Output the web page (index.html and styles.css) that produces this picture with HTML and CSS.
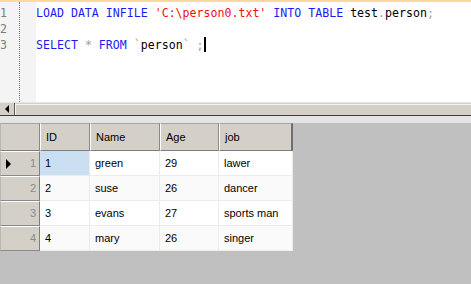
FILE: index.html
```html
<!DOCTYPE html>
<html lang="en">
<head>
    <meta charset="UTF-8">
    <title>Query</title>
    <link rel="stylesheet" href="styles.css">
</head>
<body>
    <div class="editor">
        <div class="gutter">
            <div class="line-nums">
                <div>1</div>
                <div>2</div>
                <div>3</div>
            </div>
        </div>
        <div class="code">
            <div class="line"><span class="kw">LOAD DATA INFILE</span> <span class="str">'C:\person0.txt'</span> <span class="kw">INTO TABLE</span> test<span class="op">.</span>person<span class="op">;</span></div>
            <div class="line">&nbsp;</div>
            <div class="line"><span class="kw">SELECT</span> <span class="op">*</span> <span class="kw">FROM</span> <span class="op">`</span>person<span class="op">`</span> <span class="op">;</span><span class="caret"></span></div>
        </div>
    </div>

    <div class="hscroll">
        <div class="arrow-btn"><span class="arrow-left"></span></div>
        <div class="thumb"></div>
    </div>
    <div class="splitter"></div>

    <div class="results">
        <div class="grid">
            <div class="hcell corner"></div>
            <div class="hcell">ID</div>
            <div class="hcell">Name</div>
            <div class="hcell">Age</div>
            <div class="hcell last">job</div>

            <div class="rowhead"><span class="marker"></span>1</div>
            <div class="cell selected">1</div>
            <div class="cell">green</div>
            <div class="cell">29</div>
            <div class="cell">lawer</div>

            <div class="rowhead">2</div>
            <div class="cell alt">2</div>
            <div class="cell alt">suse</div>
            <div class="cell alt">26</div>
            <div class="cell alt">dancer</div>

            <div class="rowhead">3</div>
            <div class="cell">3</div>
            <div class="cell">evans</div>
            <div class="cell">27</div>
            <div class="cell">sports man</div>

            <div class="rowhead">4</div>
            <div class="cell alt">4</div>
            <div class="cell alt">mary</div>
            <div class="cell alt">26</div>
            <div class="cell alt">singer</div>
        </div>
    </div>
</body>
</html>
```

FILE: styles.css
```css
html, body {
    margin: 0;
    padding: 0;
    height: 284px;
    overflow: hidden;
    background-color: #c0c0c0;
}
body {
    font-family: "Liberation Sans", Arial, sans-serif;
    font-size: 11px;
}
.editor {
    display: flex;
    height: 102px;
    border-top: 2px solid #fcd99c;
    background-color: #fff;
    box-sizing: border-box;
}
.gutter {
    width: 36px;
    flex: none;
    background-color: #f4f4f4;
}
.line-nums {
    width: 20px;
    height: 100%;
    padding-top: 3px;
    box-sizing: border-box;
    border-right: 1px dotted #777;
    font-family: "DejaVu Sans Mono", monospace;
    font-size: 11.6px;
    line-height: 16px;
    color: #7c7c7c;
}
.code {
    flex: 1;
    padding-top: 3px;
    font-family: "DejaVu Sans Mono", monospace;
    font-size: 11.6px;
    line-height: 16px;
    color: #000;
}
.line {
    white-space: pre;
}
.kw { color: #1c1cf0; }
.str { color: #f01010; }
.op { color: #a0a0a0; }
.caret {
    display: inline-block;
    width: 2px;
    height: 15px;
    margin-left: 0;
    vertical-align: -3px;
    background-color: #000;
}
.hscroll {
    display: flex;
    height: 12px;
    border-top: 1px solid #e8e6e1;
    background-color: #d4d0c8;
}
.arrow-btn {
    width: 14px;
    border-right: 1px solid #5a5a5a;
    display: flex;
    align-items: center;
    justify-content: center;
}
.arrow-left {
    width: 0;
    height: 0;
    border-top: 4px solid transparent;
    border-bottom: 4px solid transparent;
    border-right: 4px solid #000;
}
.thumb {
    flex: 1;
    border-left: 1px solid #f4f3ef;
    border-top: 1px solid #f4f3ef;
    margin-top: 1px;
}
.splitter {
    height: 1px;
    background-color: #3c3c3c;
}
.results {
    border-top: 7px solid #e4e4e4;
}
.grid {
    display: grid;
    width: 293px;
    grid-template-columns: 40px 50px 70px 59px 74px;
    grid-template-rows: 28px repeat(4, 25px);
    color: #000;
}
.hcell, .rowhead, .cell {
    box-sizing: border-box;
}
.hcell {
    background-color: #d4d0c8;
    border-top: 1px solid #a4a4a4;
    border-bottom: 1px solid #7e7e7e;
    border-left: 1px solid #fff;
    border-right: 1px solid #8a8a8a;
    padding-left: 5px;
    line-height: 26px;
}
.hcell.corner {
    border-left: 1px solid #b8b8b8;
}
.hcell.last {
    border-right: 2px solid #6e6e6e;
}
.rowhead {
    position: relative;
    background-color: #d4d0c8;
    border-top: 1px solid #fff;
    border-bottom: 1px solid #8a8a8a;
    border-left: 1px solid #b8b8b8;
    border-right: 1px solid #7e7e7e;
    color: #8a8a8a;
    text-align: right;
    padding-right: 3px;
    line-height: 23px;
}
.marker {
    position: absolute;
    left: 5px;
    top: 7px;
    width: 0;
    height: 0;
    border-top: 5px solid transparent;
    border-bottom: 5px solid transparent;
    border-left: 5px solid #000;
}
.cell {
    background-color: #fff;
    border-right: 1px solid #ececec;
    border-bottom: 1px solid #ececec;
    padding-left: 5px;
    line-height: 24px;
    white-space: nowrap;
}
.cell.alt {
    background-color: #fafafa;
}
.cell.selected {
    background-color: #cbdff3;
}
```
